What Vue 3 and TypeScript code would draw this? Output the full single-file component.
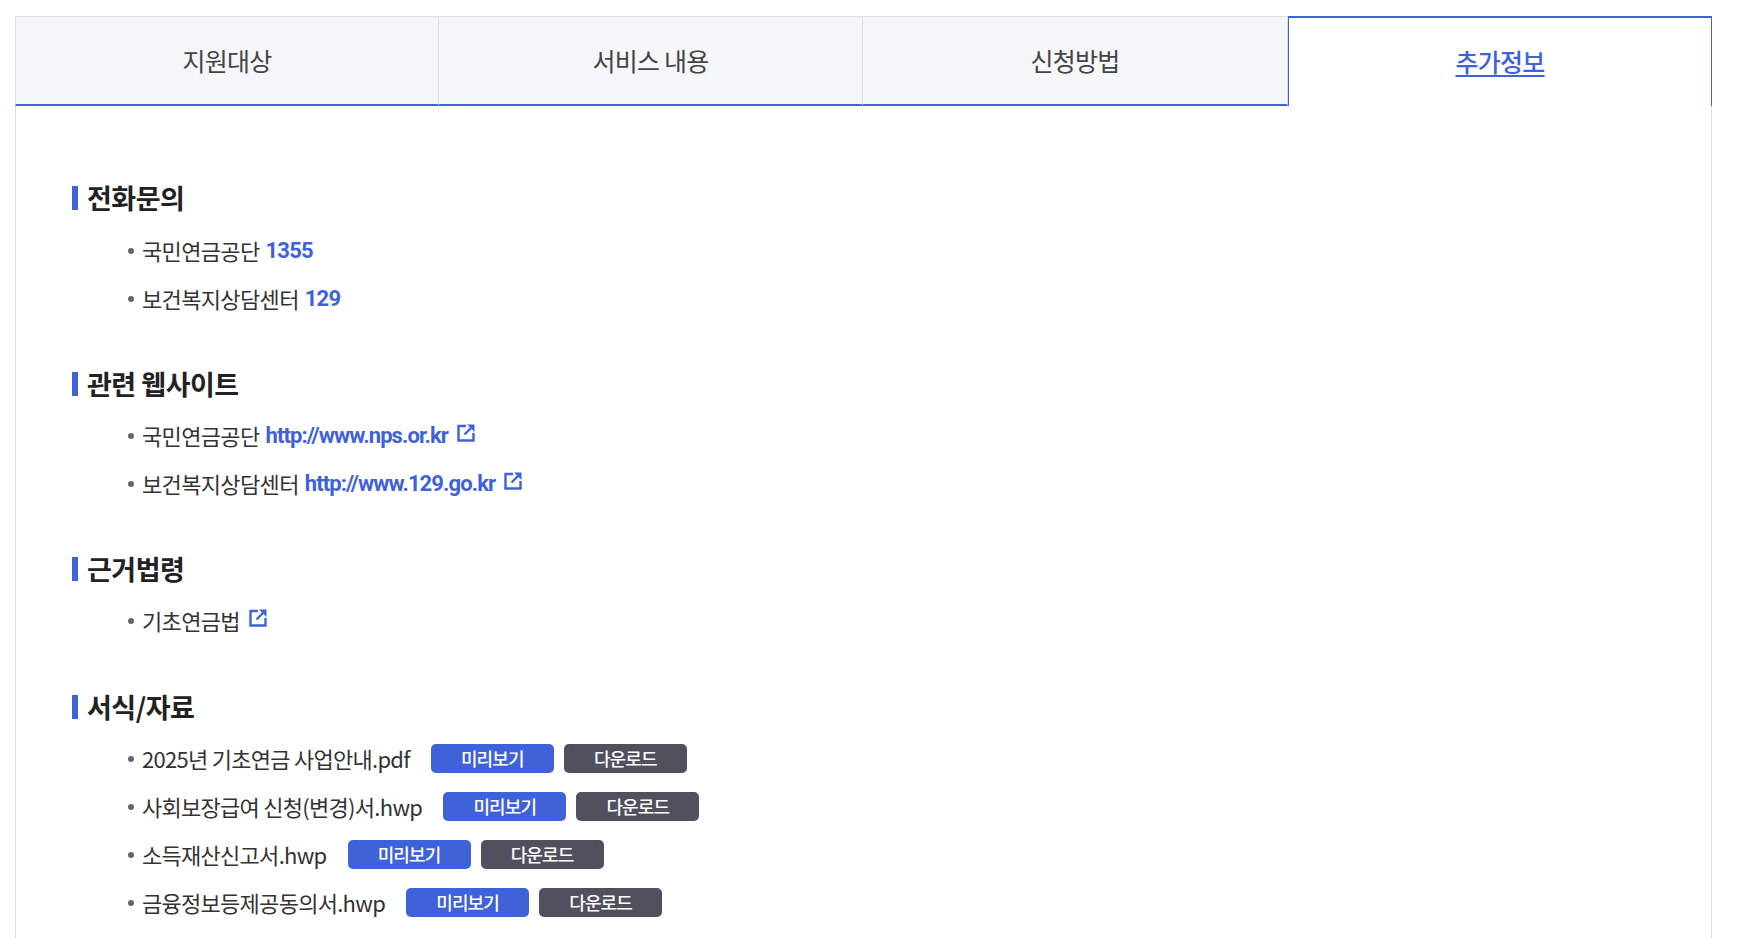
<script setup lang="ts">
const tabs = ['지원대상', '서비스 내용', '신청방법', '추가정보']
const phones = [
  { name: '국민연금공단', num: '1355' },
  { name: '보건복지상담센터', num: '129' },
]
const sites = [
  { name: '국민연금공단', url: 'http://www.nps.or.kr' },
  { name: '보건복지상담센터', url: 'http://www.129.go.kr' },
]
const files = ['2025년 기초연금 사업안내.pdf', '사회보장급여 신청(변경)서.hwp', '소득재산신고서.hwp', '금융정보등제공동의서.hwp']
</script>

<template>
  <div class="page">
    <ul class="tabs">
      <li v-for="(t, i) in tabs" :key="t" class="tab" :class="{ active: i === 3 }">{{ t }}</li>
    </ul>
    <div class="panel">
      <section class="sec phones">
        <h3 class="title">전화문의</h3>
        <ul class="list">
          <li v-for="p in phones" :key="p.name" class="item">
            <span>{{ p.name }}</span><b class="link">{{ p.num }}</b>
          </li>
        </ul>
      </section>
      <section class="sec sites">
        <h3 class="title">관련 웹사이트</h3>
        <ul class="list">
          <li v-for="s in sites" :key="s.name" class="item">
            <span>{{ s.name }}</span><b class="link url">{{ s.url }}</b>
            <svg class="ext" viewBox="0 0 18 18" fill="none" stroke="#3f62d9" stroke-width="2.4">
              <path d="M9 2H1.5V16.5H16.5V9" />
              <path d="M7.5 10.5L14 4" />
              <path d="M10 0.5H17.5V8Z" fill="#3f62d9" stroke="none" />
            </svg>
          </li>
        </ul>
      </section>
      <section class="sec law">
        <h3 class="title">근거법령</h3>
        <ul class="list">
          <li class="item">
            <span>기초연금법</span>
            <svg class="ext" viewBox="0 0 18 18" fill="none" stroke="#3f62d9" stroke-width="2.4">
              <path d="M9 2H1.5V16.5H16.5V9" />
              <path d="M7.5 10.5L14 4" />
              <path d="M10 0.5H17.5V8Z" fill="#3f62d9" stroke="none" />
            </svg>
          </li>
        </ul>
      </section>
      <section class="sec last">
        <h3 class="title">서식/자료</h3>
        <ul class="list">
          <li v-for="f in files" :key="f" class="item file">
            <span>{{ f }}</span>
            <a class="btn blue">미리보기</a>
            <a class="btn dark">다운로드</a>
          </li>
        </ul>
      </section>
    </div>
  </div>
</template>

<style>
html, body { background: #fff; }
</style>

<style scoped>
.page {
  box-sizing: border-box;
  width: 1752px;
  height: 938px;
  padding: 16px 40px 0 15px;
  overflow: hidden;
  font-family: "Noto Sans CJK KR", "Noto Sans", sans-serif;
  color: #333;
}
ul { list-style: none; margin: 0; padding: 0; }
.tabs {
  display: grid;
  grid-template-columns: 424px 424px 425px 424px;
  height: 90px;
  box-sizing: border-box;
}
.tab {
  box-sizing: border-box;
  display: flex;
  align-items: center;
  justify-content: center;
  padding-bottom: 2px;
  background: #f5f6fa;
  border-top: 1px solid #dedfe2;
  border-right: 1px solid #dedfe2;
  border-bottom: 2px solid #3f62d9;
  font-size: 25px;
  letter-spacing: -0.75px;
  color: #444;
}
.tab:first-child { border-left: 1px solid #dedfe2; }
.tab.active {
  background: #fff;
  border: 1px solid #3f62d9;
  border-top-width: 2px;
  border-bottom: 0;
  padding-bottom: 3px;
  color: #3f62d9;
  font-weight: 500;
  text-decoration: underline;
  text-underline-offset: 3px;
}
.panel {
  border-left: 1px solid #dedfe2;
  border-right: 1px solid #dedfe2;
  padding: 73px 56px 0;
  height: 900px;
}
.sec { margin-bottom: 44px; }
.sec.sites { margin-bottom: 43px; }
.sec.last { margin-bottom: 0; }
.phones .list { padding-top: 1px; margin-bottom: -1px; }
.title {
  position: relative;
  margin: 0 0 8px;
  padding-left: 15px;
  font-size: 27px;
  line-height: 38px;
  font-weight: 700;
  letter-spacing: -0.5px;
  color: #222;
}
.title::before {
  content: "";
  position: absolute;
  left: 0;
  top: 7px;
  width: 6px;
  height: 24px;
  background: #3f62d9;
}
.list { padding-left: 55px; }
.item {
  position: relative;
  display: flex;
  align-items: center;
  height: 48px;
  padding-left: 15px;
  font-size: 22px;
  letter-spacing: -0.65px;
  color: #333;
}
.item.file { letter-spacing: -0.72px; }
.item::before {
  content: "";
  position: absolute;
  left: 1px;
  top: 22px;
  width: 6px;
  height: 6px;
  border-radius: 50%;
  background: #666;
}
.link {
  margin-left: 6px;
  font-family: Roboto, sans-serif;
  font-weight: 700;
  letter-spacing: -0.8px;
  color: #3f62d9;
}
.url { letter-spacing: -0.9px; }
.ext {
  width: 18px;
  height: 18px;
  margin: -4px 0 0 9px;
  flex: none;
}
.btn {
  box-sizing: border-box;
  display: flex;
  align-items: center;
  justify-content: center;
  width: 123px;
  height: 29px;
  border-radius: 5px;
  color: #fff;
  font-size: 18px;
  font-weight: 500;
  letter-spacing: -0.9px;
}
.blue { margin-left: 21px; background: #3f62d9; }
.dark { margin-left: 10px; background: #50505e; }
</style>
